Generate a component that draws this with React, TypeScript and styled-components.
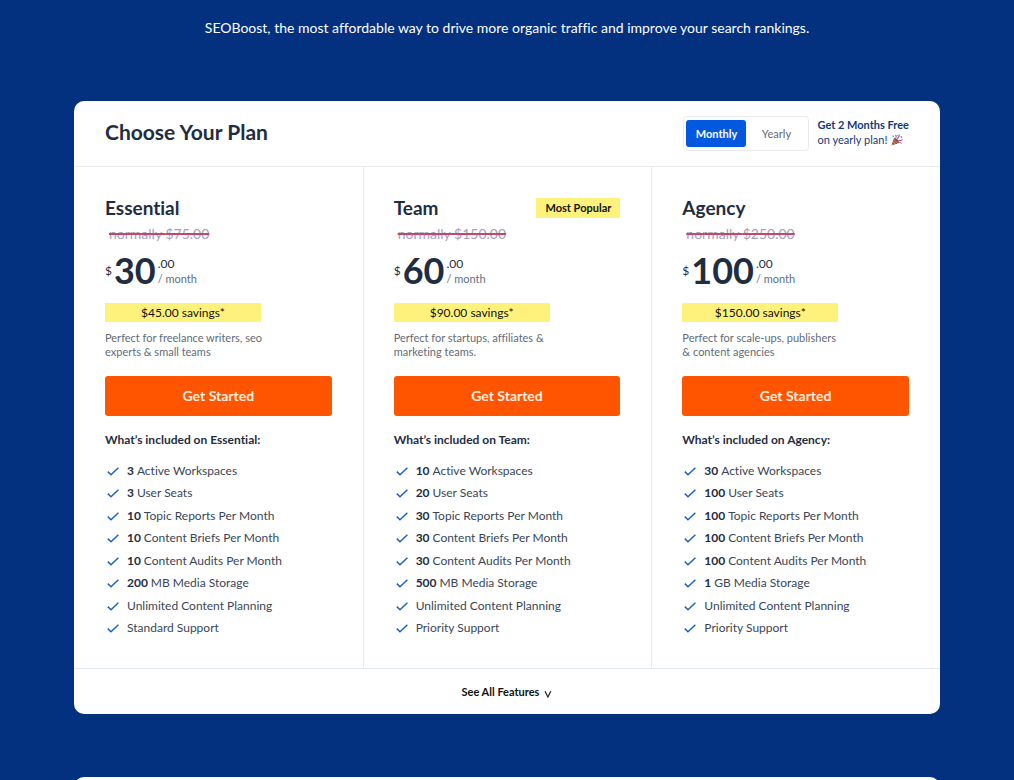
import React, { useState } from "react";
import styled, { createGlobalStyle } from "styled-components";

const GlobalStyle = createGlobalStyle`
  *, *::before, *::after { box-sizing: border-box; }
  body {
    margin: 0;
    background: #033180;
    color: #1f2d42;
    font-family: Lato, "Liberation Sans", sans-serif;
    font-variant-ligatures: none;
  }
  h1, h2, h3, p, ul { margin: 0; padding: 0; font-weight: inherit; }
  button { font-family: inherit; border: 0; cursor: pointer; }
`;

const Page = styled.div`
  min-height: 100vh;
  display: flex;
  flex-direction: column;
  padding: 18px 74px 0;
`;

const Intro = styled.p`
  color: #fff;
  font-size: 14px;
  line-height: 20px;
  text-align: center;
  margin-bottom: 63px;
`;

const Card = styled.section`
  background: #fff;
  border-radius: 10px;
  margin-bottom: 63px;
`;

const CardHeader = styled.header`
  display: flex;
  align-items: flex-start;
  justify-content: space-between;
  padding: 15px 31px;
  border-bottom: 1px solid #e8ebf0;
`;

const Title = styled.h1`
  font-size: 21px;
  line-height: 32px;
  font-weight: 700;
`;

const Billing = styled.div`
  display: flex;
  align-items: center;
  gap: 8px;
`;

const Toggle = styled.div`
  display: flex;
  padding: 3px 2px;
  border: 1px solid #e8ebf0;
  border-radius: 4px;
`;

const ToggleButton = styled.button<{ $active: boolean }>`
  width: 60px;
  height: 27px;
  padding: 0;
  border-radius: 3px;
  font-size: 11px;
  font-weight: ${(p) => (p.$active ? 700 : 500)};
  color: ${(p) => (p.$active ? "#fff" : "#6b7480")};
  background: ${(p) => (p.$active ? "#0358e0" : "transparent")};
`;

const Offer = styled.p`
  padding-bottom: 3px;
  color: #123a78;
  font-size: 11px;
  line-height: 15px;
`;

const OfferLine = styled.span`
  display: flex;
  align-items: center;
  gap: 4px;
`;

const Strong = styled.strong`
  font-weight: 700;
`;

const OfferHeadline = styled(Strong)`
  display: block;
`;

const Plans = styled.div`
  display: grid;
  grid-template-columns: repeat(3, 1fr);
`;

const PlanColumn = styled.article`
  padding: 29px 31px 32px;
  & + & { border-left: 1px solid #e8ebf0; padding-left: 30px; }
`;

const PlanHead = styled.div`
  display: flex;
  align-items: center;
  justify-content: space-between;
  height: 24px;
`;

const PlanName = styled.h2`
  font-size: 19px;
  line-height: 24px;
  font-weight: 700;
`;

const Badge = styled.span`
  padding: 0 9px;
  background: #fff27c;
  color: #111;
  font-size: 11px;
  line-height: 20px;
  font-weight: 700;
`;

const OldPrice = styled.s`
  display: block;
  width: fit-content;
  margin: 4px 0 0 4px;
  color: #a99db8;
  font-size: 14px;
  line-height: 20px;
  text-decoration: line-through 2px #c4476b;
`;

const Price = styled.div`
  display: flex;
  align-items: center;
  gap: 2px;
  height: 40px;
  margin-top: 7px;
`;

const Currency = styled.span`
  font-size: 12px;
  line-height: 16px;
`;

const Amount = styled.span`
  padding-bottom: 3px;
  font-size: 36px;
  line-height: 36px;
  font-weight: 700;
`;

const PriceSide = styled.span`
  display: flex;
  flex-direction: column;
  font-size: 12px;
  line-height: 15px;
`;

const Period = styled.span`
  color: #5f6f82;
  font-size: 11px;
`;

const Savings = styled.p`
  width: 156px;
  margin-top: 12px;
  background: #fff27c;
  color: #111;
  font-size: 12px;
  line-height: 19px;
  text-align: center;
`;

const Description = styled.p`
  margin-top: 9px;
  color: #626b78;
  font-size: 11px;
  line-height: 14px;
`;

const StartButton = styled.button`
  display: block;
  width: 100%;
  height: 40px;
  margin-top: 17px;
  padding: 0 0 2px;
  border-radius: 3px;
  background: #ff5500;
  color: #fff0e0;
  font-size: 14px;
  font-weight: 700;
`;

const IncludedTitle = styled.h3`
  margin-top: 16px;
  font-size: 12px;
  line-height: 16px;
  font-weight: 700;
`;

const FeatureList = styled.ul`
  display: flex;
  flex-direction: column;
  justify-content: space-between;
  min-height: 173px;
  margin-top: 15px;
  list-style: none;
`;

const Feature = styled.li`
  display: flex;
  align-items: center;
  gap: 8px;
  padding-left: 2px;
  color: #3a4656;
  font-size: 12px;
  line-height: 16px;
  & strong { color: #1f2d42; }
`;

const CardFooter = styled.footer`
  display: flex;
  justify-content: center;
  border-top: 1px solid #e3e8ee;
  padding: 13px 0 12px;
`;

const SeeAll = styled.button`
  display: flex;
  align-items: center;
  gap: 5px;
  padding: 0;
  background: none;
  color: #111;
  font-size: 11px;
  line-height: 20px;
  font-weight: 700;
`;

const NextCard = styled.section`
  flex: 1;
  min-height: 40px;
  background: #fff;
  border-radius: 10px 10px 0 0;
`;

const CheckIcon = () => (
  <svg width="12" height="10" viewBox="0 0 12 10" fill="none" aria-hidden="true">
    <path d="M.8 5.6 4 8.8 11.4 1.8" stroke="#1763c6" strokeWidth="1.5" />
  </svg>
);

const ChevronIcon = () => (
  <svg width="8" height="12" viewBox="0 0 8 12" fill="none" aria-hidden="true">
    <path d="M1 5.2 3.9 11 6.8 5.2" stroke="#222" strokeWidth="1.2" />
  </svg>
);

const PartyIcon = () => (
  <svg width="12" height="12" viewBox="0 0 12 12" fill="none" aria-hidden="true">
    <path d="M.4 11.6 3 3.8 8.2 9Z" fill="#b98a62" />
    <path d="M2.2 6.2 5.8 9.8M1.3 8.8 3.2 10.7" stroke="#7f5440" strokeWidth="1.1" />
    <path d="M3 3.8C5 3.8 8 6.8 8.2 9 6 9 3 5.8 3 3.8Z" fill="#8a4a5c" />
    <path d="M4.6 3.8C5.6 3 5.2 1.9 4.4 1" stroke="#d0496b" strokeWidth="1.1" />
    <path d="M6.2 5.4C6.7 3.6 7.4 3.8 7.9 2.8 8.2 2 8 1.3 8.4.7" stroke="#4a7fd0" strokeWidth="1.2" />
    <path d="M7.4 6.6C8.6 5.8 9 7 10 6.6 10.8 6.2 10.8 5.5 11.5 5.6" stroke="#d0496b" strokeWidth="1.1" />
    <path d="M8.3 8.3C9.4 8.2 10 9 10.6 9.7" stroke="#8a55c0" strokeWidth="1" />
    <circle cx="2.2" cy="2.2" r=".8" fill="#5c86c8" />
    <circle cx="6.3" cy="1.5" r=".7" fill="#c79a4a" />
    <circle cx="10.3" cy="3" r=".9" fill="#cf7b4a" />
  </svg>
);

type Plan = {
  name: string;
  popular?: boolean;
  normally: string;
  amount: string;
  savings: string;
  description: [string, string];
  features: [string, string][];
};

const plans: Plan[] = [
  {
    name: "Essential",
    normally: "$75.00",
    amount: "30",
    savings: "$45.00",
    description: ["Perfect for freelance writers, seo", "experts & small teams"],
    features: [
      ["3", "Active Workspaces"],
      ["3", "User Seats"],
      ["10", "Topic Reports Per Month"],
      ["10", "Content Briefs Per Month"],
      ["10", "Content Audits Per Month"],
      ["200", "MB Media Storage"],
      ["", "Unlimited Content Planning"],
      ["", "Standard Support"],
    ],
  },
  {
    name: "Team",
    popular: true,
    normally: "$150.00",
    amount: "60",
    savings: "$90.00",
    description: ["Perfect for startups, affiliates &", "marketing teams."],
    features: [
      ["10", "Active Workspaces"],
      ["20", "User Seats"],
      ["30", "Topic Reports Per Month"],
      ["30", "Content Briefs Per Month"],
      ["30", "Content Audits Per Month"],
      ["500", "MB Media Storage"],
      ["", "Unlimited Content Planning"],
      ["", "Priority Support"],
    ],
  },
  {
    name: "Agency",
    normally: "$250.00",
    amount: "100",
    savings: "$150.00",
    description: ["Perfect for scale-ups, publishers", "& content agencies"],
    features: [
      ["30", "Active Workspaces"],
      ["100", "User Seats"],
      ["100", "Topic Reports Per Month"],
      ["100", "Content Briefs Per Month"],
      ["100", "Content Audits Per Month"],
      ["1", "GB Media Storage"],
      ["", "Unlimited Content Planning"],
      ["", "Priority Support"],
    ],
  },
];

const PlanView = ({ plan }: { plan: Plan }) => (
  <PlanColumn>
    <PlanHead>
      <PlanName>{plan.name}</PlanName>
      {plan.popular && <Badge>Most Popular</Badge>}
    </PlanHead>
    <OldPrice>normally {plan.normally}</OldPrice>
    <Price>
      <Currency>$</Currency>
      <Amount>{plan.amount}</Amount>
      <PriceSide>
        <span>.00</span>
        <Period>/ month</Period>
      </PriceSide>
    </Price>
    <Savings>{plan.savings} savings*</Savings>
    <Description>
      {plan.description[0]}
      <br />
      {plan.description[1]}
    </Description>
    <StartButton type="button">Get Started</StartButton>
    <IncludedTitle>What’s included on {plan.name}:</IncludedTitle>
    <FeatureList>
      {plan.features.map(([count, label]) => (
        <Feature key={label}>
          <CheckIcon />
          <span>
            {count && <Strong>{count} </Strong>}
            {label}
          </span>
        </Feature>
      ))}
    </FeatureList>
  </PlanColumn>
);

export default function App() {
  const [billing, setBilling] = useState("Monthly");
  return (
    <>
      <GlobalStyle />
      <Page>
        <Intro>
          SEOBoost, the most affordable way to drive more organic traffic and improve your search rankings.
        </Intro>
        <Card>
          <CardHeader>
            <Title>Choose Your Plan</Title>
            <Billing>
              <Toggle role="group" aria-label="Billing period">
                {["Monthly", "Yearly"].map((period) => (
                  <ToggleButton
                    key={period}
                    type="button"
                    $active={billing === period}
                    aria-pressed={billing === period}
                    onClick={() => setBilling(period)}
                  >
                    {period}
                  </ToggleButton>
                ))}
              </Toggle>
              <Offer>
                <OfferHeadline>Get 2 Months Free</OfferHeadline>
                <OfferLine>
                  on yearly plan! <PartyIcon />
                </OfferLine>
              </Offer>
            </Billing>
          </CardHeader>
          <Plans>
            {plans.map((plan) => (
              <PlanView key={plan.name} plan={plan} />
            ))}
          </Plans>
          <CardFooter>
            <SeeAll type="button">
              See All Features <ChevronIcon />
            </SeeAll>
          </CardFooter>
        </Card>
        <NextCard />
      </Page>
    </>
  );
}
